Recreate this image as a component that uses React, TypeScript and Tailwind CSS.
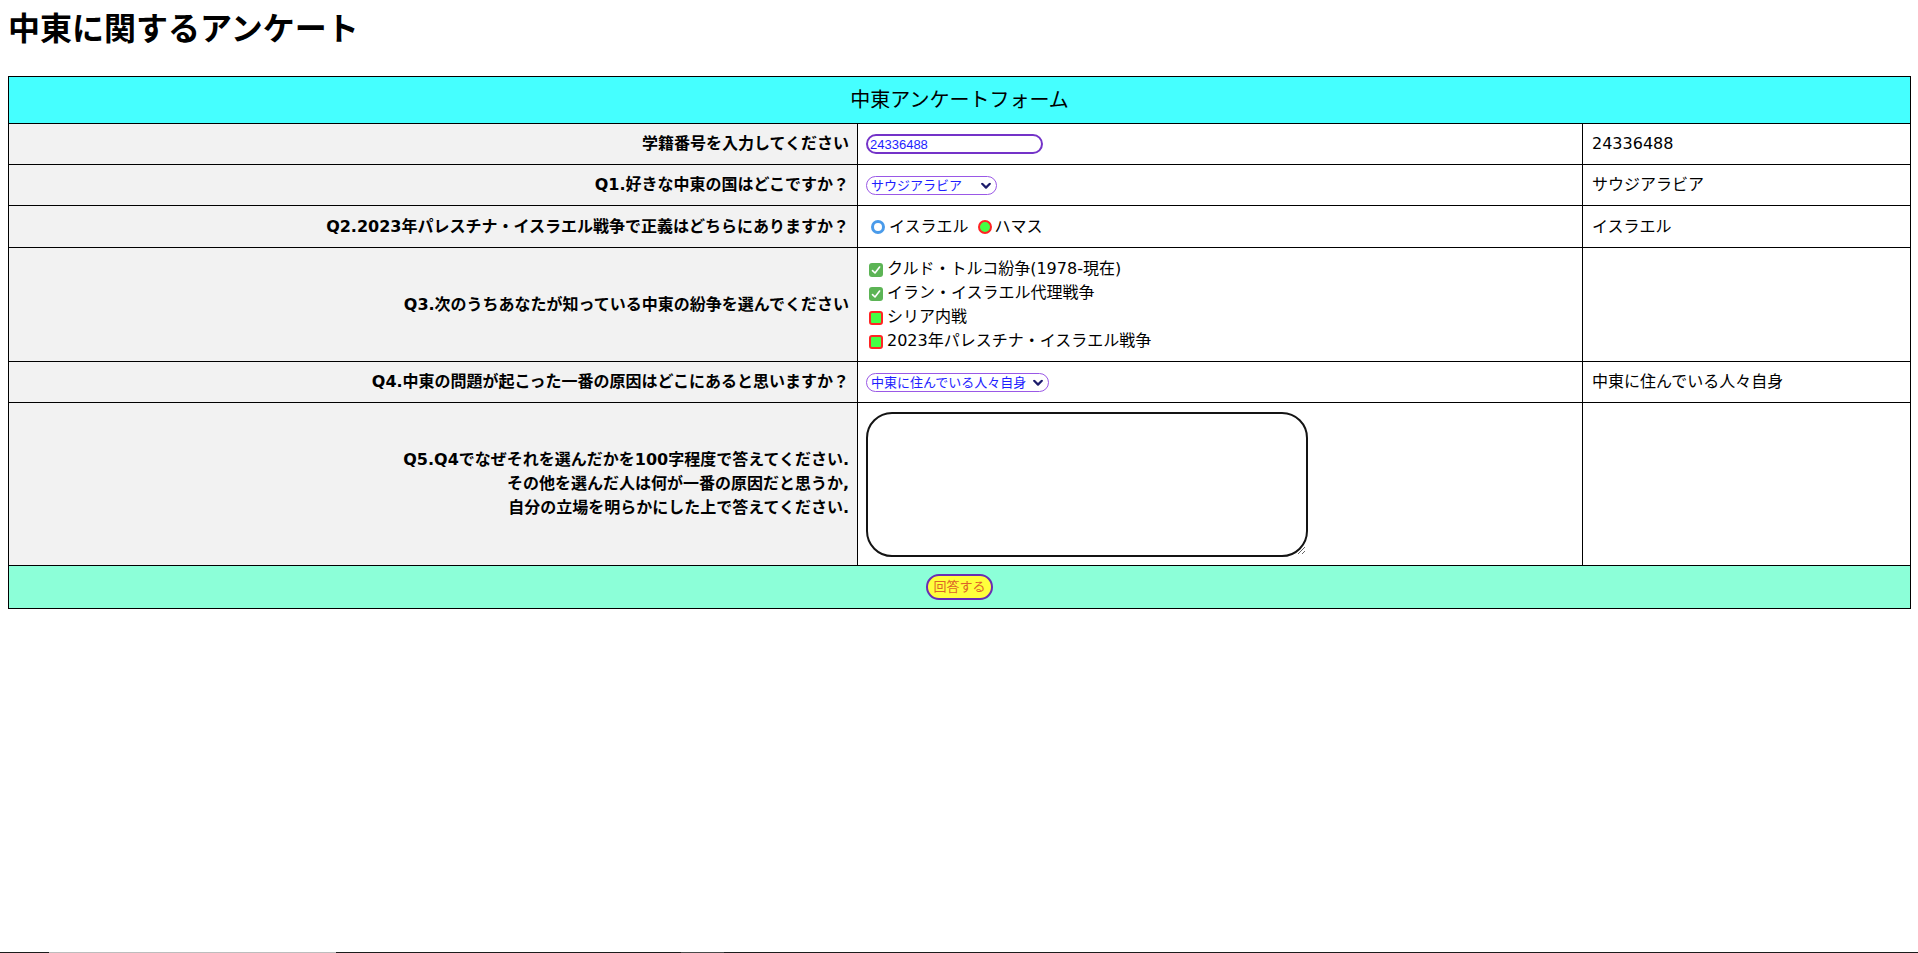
import { useState } from 'react';

const countries = ['サウジアラビア', 'イラン', 'イスラエル', 'トルコ', 'エジプト'];
const causes = ['中東に住んでいる人々自身', '欧米諸国', 'ロシア', 'その他'];

const conflicts = [
  { label: 'クルド・トルコ紛争(1978-現在)', checked: true },
  { label: 'イラン・イスラエル代理戦争', checked: true },
  { label: 'シリア内戦', checked: false },
  { label: '2023年パレスチナ・イスラエル戦争', checked: false },
];

const controlFont = "font-['Liberation_Sans','Noto_Sans_CJK_JP',sans-serif]";

function Chevron() {
  return (
    <svg
      width="10"
      height="7"
      viewBox="0 0 10 7"
      className="pointer-events-none absolute top-1/2 -translate-y-1/2"
      style={{ right: 6 }}
    >
      <path d="M1.2 1.3 5 5.1 8.8 1.3" fill="none" stroke="#1c1c6b" strokeWidth="2.2" strokeLinecap="round" strokeLinejoin="round" />
    </svg>
  );
}

function PillSelect(props: { value: string; options: string[]; width: string; onChange: (v: string) => void }) {
  return (
    <div className={`relative inline-block align-middle ${props.width}`}>
      <select
        value={props.value}
        onChange={(e) => props.onChange(e.target.value)}
        className={`block h-[19px] w-full appearance-none rounded-full border-[1.5px] border-[#9a58e6] bg-white pl-[4px] pr-4 text-[13px] leading-[15px] text-[#1e1eff] outline-none ${controlFont}`}
      >
        {props.options.map((o) => (
          <option key={o} value={o}>
            {o}
          </option>
        ))}
      </select>
      <Chevron />
    </div>
  );
}

export default function App() {
  const [studentId, setStudentId] = useState('24336488');
  const [country, setCountry] = useState('サウジアラビア');
  const [cause, setCause] = useState('中東に住んでいる人々自身');

  const label = 'border border-black bg-[#f2f2f2] pr-[8px] pl-2 text-right text-[16px] font-bold leading-6 align-middle';
  const mid = 'border border-black bg-white px-2 align-middle';
  const right = 'border border-black bg-white pl-[9px] pr-2 text-[16px] leading-6 align-middle';

  return (
    <div className="min-h-[953px] bg-white px-2 pt-2 font-['DejaVu_Sans','Noto_Sans_CJK_JP',sans-serif] text-black">
      <h1 className="mb-8 font-['Noto_Sans_CJK_JP',sans-serif] text-[32px] font-bold leading-9">中東に関するアンケート</h1>

      <table className="w-[1902px] table-fixed border-collapse border border-black">
        <colgroup>
          <col className="w-[849px]" />
          <col className="w-[725px]" />
          <col className="w-[328px]" />
        </colgroup>
        <tbody>
          <tr className="h-[47px]">
            <td colSpan={3} className="border border-black bg-[#45ffff] text-center text-[20px] leading-7">
              中東アンケートフォーム
            </td>
          </tr>
          <tr className="h-[41px]">
            <td className={label}>学籍番号を入力してください</td>
            <td className={mid}>
              <input
                value={studentId}
                onChange={(e) => setStudentId(e.target.value)}
                className={`block h-[20px] w-[177px] rounded-full border-2 border-[#7433c8] px-[2px] text-[13px] leading-4 text-[#1e1eff] outline-none ${controlFont}`}
              />
            </td>
            <td className={right}>{studentId}</td>
          </tr>
          <tr className="h-[41px]">
            <td className={label}>Q1.好きな中東の国はどこですか？</td>
            <td className={mid}>
              <PillSelect value={country} options={countries} width="w-[131px]" onChange={setCountry} />
            </td>
            <td className={right}>{country}</td>
          </tr>
          <tr className="h-[42px]">
            <td className={label}>Q2.2023年パレスチナ・イスラエル戦争で正義はどちらにありますか？</td>
            <td className={mid}>
              <div className="flex items-center text-[16px] leading-6">
                <span className="ml-[5px] mr-[4px] box-border h-[14px] w-[14px] rounded-full border-[3px] border-[#4a9bea] bg-white" />
                <span>イスラエル</span>
                <span className="ml-[9px] mr-[3px] box-border h-[14px] w-[14px] rounded-full border-2 border-[#ff2424] bg-[#44ff44]" />
                <span>ハマス</span>
              </div>
            </td>
            <td className={right}>イスラエル</td>
          </tr>
          <tr className="h-[114px]">
            <td className={label}>Q3.次のうちあなたが知っている中東の紛争を選んでください</td>
            <td className={mid}>
              <div className="flex flex-col text-[16px] leading-6">
                {conflicts.map((c) => (
                  <div key={c.label} className="flex items-center">
                    {c.checked ? (
                      <span className="ml-[3px] mr-[4px] mt-[3px] flex h-[14px] w-[14px] items-center justify-center rounded-[3px] bg-[#5cb455]">
                        <svg width="10" height="10" viewBox="0 0 10 10">
                          <path d="M1.5 5.6 4 8 8.6 2" fill="none" stroke="#fff" strokeWidth="1.6" strokeLinecap="round" strokeLinejoin="round" />
                        </svg>
                      </span>
                    ) : (
                      <span className="ml-[3px] mr-[4px] mt-[3px] box-border h-[14px] w-[14px] rounded-[3px] border-2 border-[#ff2424] bg-[#44ff44]" />
                    )}
                    <span>{c.label}</span>
                  </div>
                ))}
              </div>
            </td>
            <td className={right}></td>
          </tr>
          <tr className="h-[41px]">
            <td className={label}>Q4.中東の問題が起こった一番の原因はどこにあると思いますか？</td>
            <td className={mid}>
              <PillSelect value={cause} options={causes} width="w-[183px]" onChange={setCause} />
            </td>
            <td className={right}>{cause}</td>
          </tr>
          <tr className="h-[163px]">
            <td className={label}>
              Q5.Q4でなぜそれを選んだかを100字程度で答えてください.
              <br />
              その他を選んだ人は何が一番の原因だと思うか,
              <br />
              自分の立場を明らかにした上で答えてください.
            </td>
            <td className={mid}>
              <textarea className="block h-[145px] w-[442px] rounded-[26px] border-2 border-[#141414] bg-white p-2 text-[14px] outline-none" />
            </td>
            <td className={right}></td>
          </tr>
          <tr className="h-[43px]">
            <td colSpan={3} className="border border-black bg-[#8cffd8] text-center align-middle">
              <button
                type="button"
                className={`h-[26px] rounded-full border-2 border-[#6a2db4] bg-[#ffff3c] px-[5px] text-[13px] leading-4 text-[#dc6428] ${controlFont}`}
              >
                回答する
              </button>
            </td>
          </tr>
        </tbody>
      </table>

      <div className="fixed bottom-0 left-0 right-0 flex h-px">
        <div className="w-[49px] bg-[#1c1c1c]" />
        <div className="w-[287px] bg-[#bdbdbd]" />
        <div className="w-[345px] bg-[#1c1c1c]" />
        <div className="w-[43px] bg-[#4a4a4a]" />
        <div className="flex-1 bg-[#1c1c1c]" />
      </div>
    </div>
  );
}
